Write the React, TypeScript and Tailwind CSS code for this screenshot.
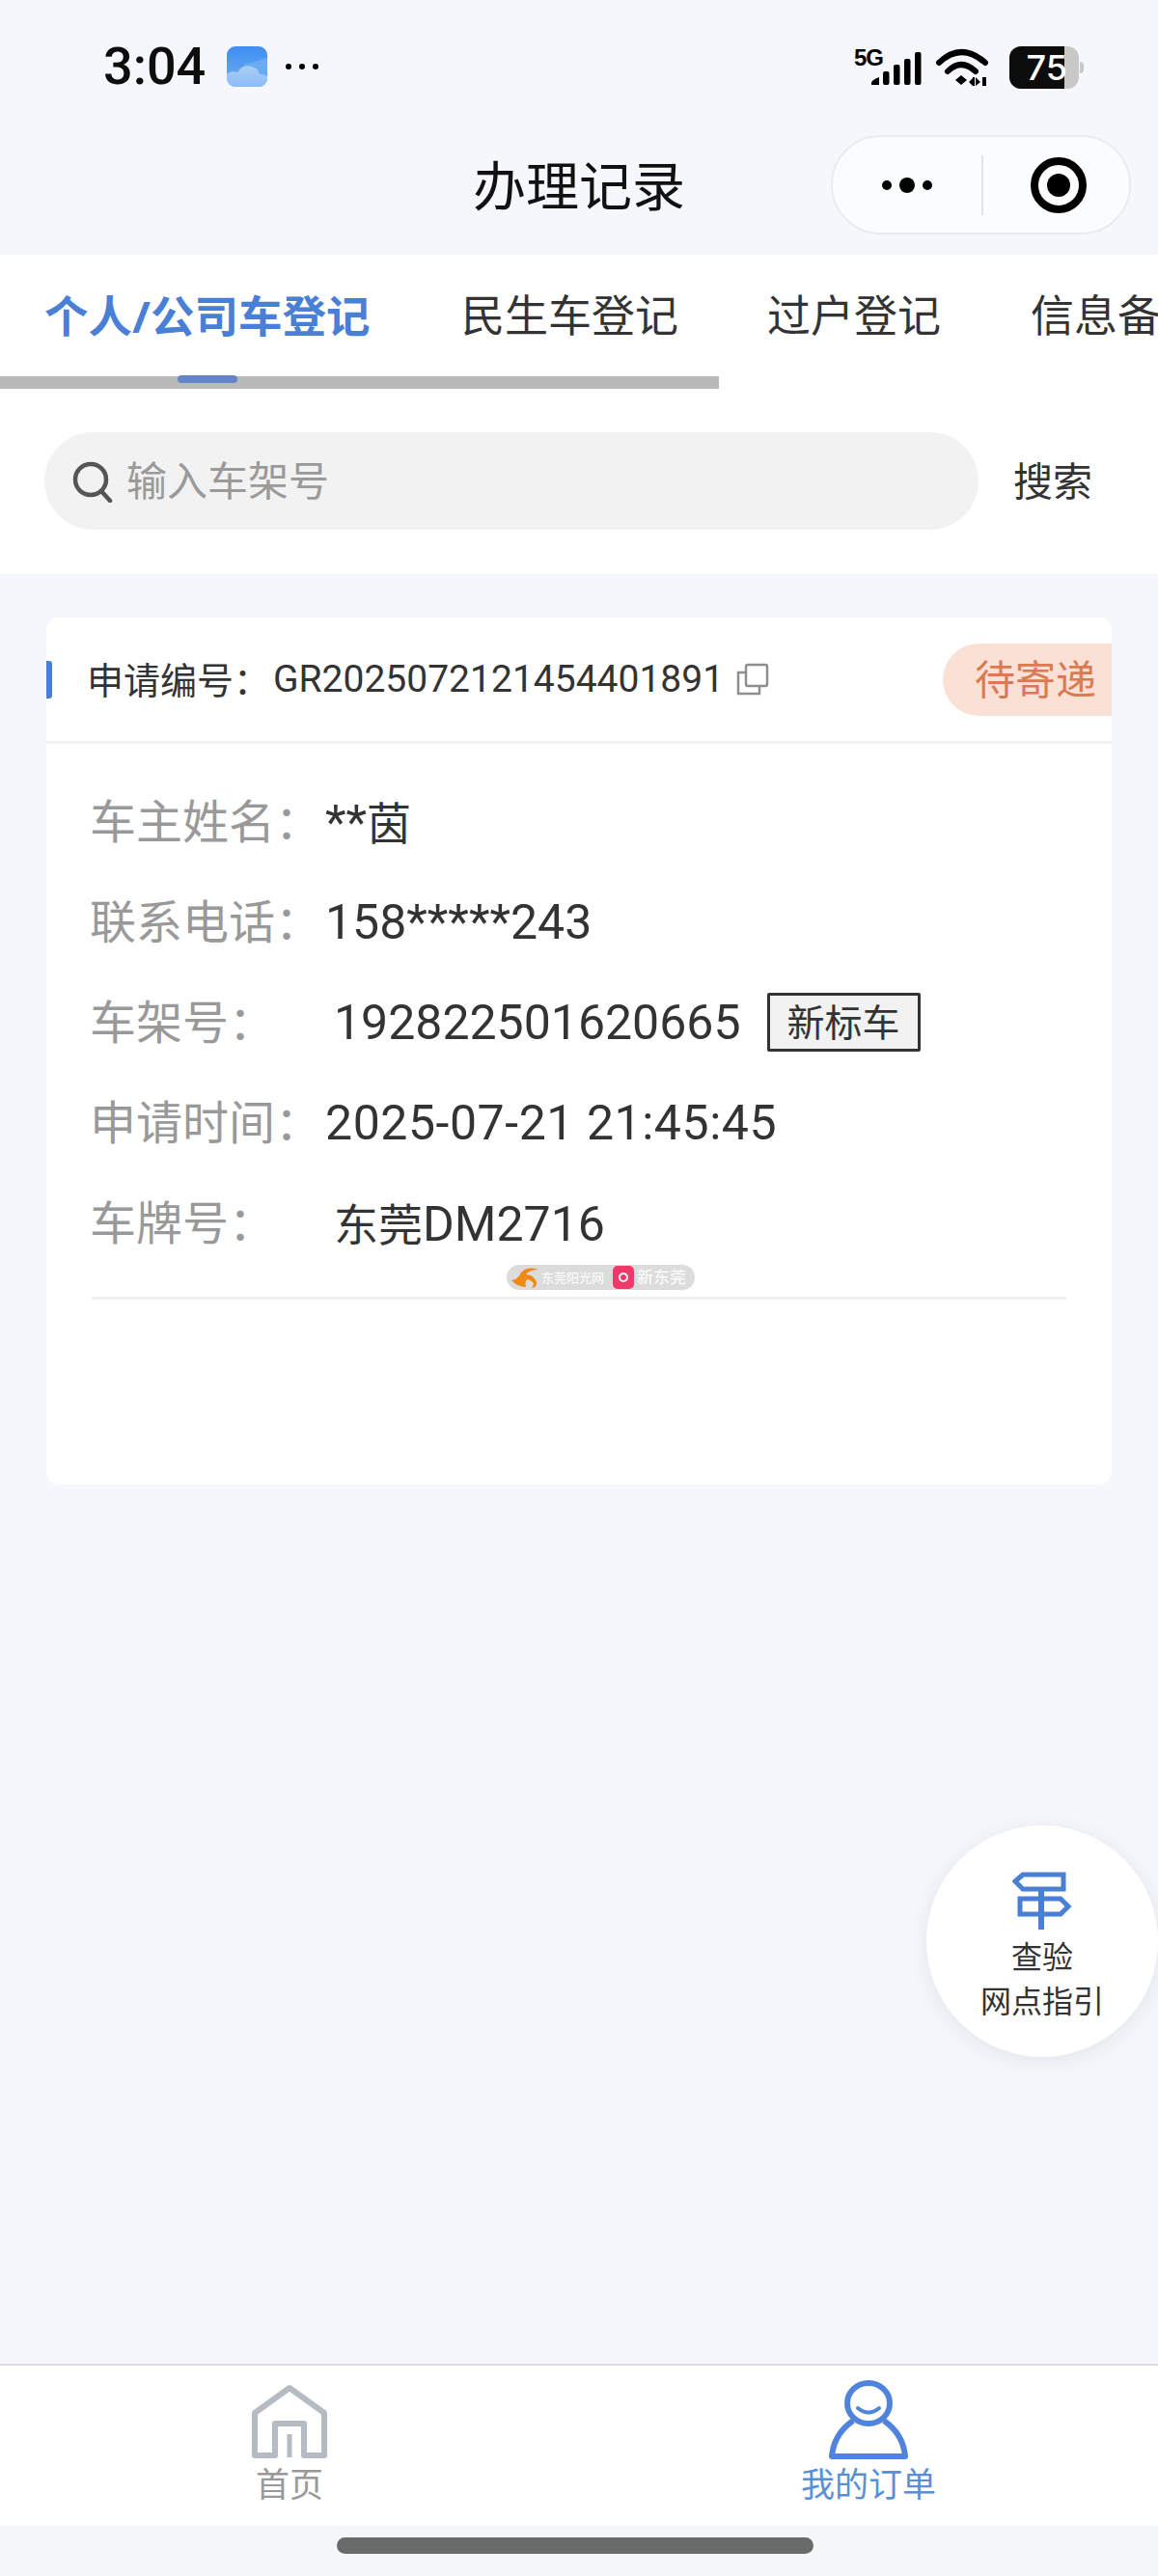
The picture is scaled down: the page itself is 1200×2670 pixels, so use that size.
import type { ReactNode } from 'react'

const cjk = 'font-["Noto_Sans","Noto_Sans_CJK_SC",sans-serif]'
const num = 'font-["Roboto","Noto_Sans_CJK_SC",sans-serif]'

const rows: { label: string; value: ReactNode; tag?: string; inset?: boolean; wide?: boolean }[] = [
  { label: '车主姓名：', value: <>**<span className={`text-[46px] ${cjk}`}>茵</span></> },
  { label: '联系电话：', value: '158*****243' },
  { label: '车架号：', value: '192822501620665', tag: '新标车', inset: true },
  { label: '申请时间：', value: '2025-07-21 21:45:45', wide: true },
  { label: '车牌号：', value: <><span className={`text-[46px] ${cjk}`}>东莞</span>DM2716</>, inset: true },
]

function WeatherIcon() {
  return (
    <svg width="42" height="42" viewBox="0 0 42 42" className="rounded-[9px]">
      <defs>
        <linearGradient id="sky" x1="0" y1="0" x2="0" y2="1">
          <stop offset="0" stopColor="#3f8df0" />
          <stop offset="1" stopColor="#6fb0f5" />
        </linearGradient>
        <linearGradient id="cloud" x1="0" y1="0" x2="0" y2="1">
          <stop offset="0" stopColor="#a9cdf8" />
          <stop offset="1" stopColor="#8dbdf5" />
        </linearGradient>
      </defs>
      <rect width="42" height="42" fill="url(#sky)" />
      <path d="M18 18 Q32 16 42 12 V42 H18 Z" fill="#6aaaf3" />
      <path d="M0 42 V29 Q5 24 11 27 Q16 18 26 21 Q33 23 34 29 Q39 28 42 32 V42 Z" fill="url(#cloud)" />
    </svg>
  )
}

function SignalIcons() {
  return (
    <div className="flex items-center">
      <div className="relative w-[70px] h-[40px]">
        <span className="absolute left-0 top-[-4px] text-[24px] leading-[28px] font-bold text-black font-['Liberation_Sans',sans-serif] tracking-[-1px]">
          5G
        </span>
        <svg width="70" height="40" viewBox="0 0 70 40" className="absolute left-0 top-0">
          <path d="M18 38 V36 Q18 33 26 30 V38 Z" fill="#000" />
          <rect x="30" y="24" width="6.5" height="14" rx="2" fill="#000" />
          <rect x="41" y="17" width="6.5" height="21" rx="2" fill="#000" />
          <rect x="52" y="11" width="6.5" height="27" rx="2" fill="#000" />
          <rect x="63" y="4" width="6.5" height="34" rx="2" fill="#000" />
        </svg>
      </div>
      <svg width="54" height="40" viewBox="0 0 54 40" className="ml-[15px]">
        <path d="M3 15 Q26 -7 51 15" fill="none" stroke="#000" strokeWidth="6" strokeLinecap="round" />
        <path d="M12 24 Q26 10 41 24" fill="none" stroke="#000" strokeWidth="6" strokeLinecap="round" />
        <path d="M20 33 L26 28 L32 33 L26 38 Z" fill="#000" />
        <path d="M38 39 V31 L34 35 Z M41 30 V39 L46 35 Z" fill="#000" />
        <rect x="38" y="30" width="2" height="9" fill="#000" />
        <rect x="48" y="30" width="4" height="9" fill="#000" />
      </svg>
    </div>
  )
}

function Battery() {
  return (
    <div className="flex items-center ml-[22px]">
      <div className="relative w-[72px] h-[44px] rounded-[12px] overflow-hidden bg-[#c8c8c8]">
        <div className="w-[57px] h-full bg-[#0c0c0c] flex items-center justify-end">
          <span className="text-[36px] leading-[44px] font-medium text-white font-['Inter',sans-serif] mr-[-3px]">75</span>
        </div>
      </div>
      <div className="w-[4px] h-[12px] rounded-r-full bg-[#c8c8c8] ml-[1px]" />
    </div>
  )
}

function Capsule() {
  return (
    <div className="w-[311px] h-[103px] rounded-full border-2 border-[#e9ebef] bg-[#fbfcfe] flex items-center">
      <div className="w-[154px] flex items-center justify-center gap-[8px]">
        <span className="w-[10px] h-[10px] rounded-full bg-black" />
        <span className="w-[16px] h-[16px] rounded-full bg-black" />
        <span className="w-[10px] h-[10px] rounded-full bg-black" />
      </div>
      <div className="w-[2px] h-[62px] bg-[#e1e3e8]" />
      <div className="flex-1 flex items-center justify-center pl-[5px]">
        <div className="w-[58px] h-[58px] rounded-full border-[8px] border-black flex items-center justify-center">
          <span className="w-[24px] h-[24px] rounded-full bg-black" />
        </div>
      </div>
    </div>
  )
}

function Watermark() {
  return (
    <div className="ml-[477px] w-[195px] h-[26px] rounded-full bg-[#dcdcdc] flex items-center pl-[4px] overflow-hidden">
      <svg width="30" height="24" viewBox="0 0 30 24" className="shrink-0">
        <path d="M1 15 Q8 14 11 7 Q17 0 29 4 Q20 4 16 9 Q24 9 27 17 Q28 22 22 23 Q27 17 18 14 Q14 16 16 22 Q7 22 1 15 Z" fill="#ef8a17" />
      </svg>
      <span className="ml-[2px] text-[13px] leading-[16px] text-white whitespace-nowrap shrink-0">东莞阳光网</span>
      <span className="w-[22px] h-[24px] rounded-[5px] bg-[#f0386b] ml-[9px] flex items-center justify-center shrink-0">
        <span className="w-[10px] h-[10px] rounded-full border-2 border-white" />
      </span>
      <span className="ml-[3px] text-[17px] leading-[20px] text-white whitespace-nowrap shrink-0">新东莞</span>
    </div>
  )
}

function HomeIcon() {
  return (
    <svg width="78" height="78" viewBox="0 0 78 78">
      <path
        d="M24 74 V41 H54 V74 H75 V30 L39 4 L3 30 V74 Z"
        fill="none"
        stroke="#b5bac3"
        strokeWidth="6"
        strokeLinejoin="round"
      />
      <path d="M39 52 V76" stroke="#b5bac3" strokeWidth="5" />
    </svg>
  )
}

function PersonIcon() {
  return (
    <svg width="82" height="82" viewBox="0 0 82 82">
      <ellipse cx="41" cy="24" rx="22" ry="21" fill="none" stroke="#4f83dc" strokeWidth="6" />
      <path d="M30 29 Q41 38 52 29" fill="none" stroke="#4f83dc" strokeWidth="4" strokeLinecap="round" />
      <path
        d="M25 42 Q5 56 3 79 H79 Q77 56 57 42"
        fill="none"
        stroke="#4f83dc"
        strokeWidth="6"
        strokeLinejoin="round"
      />
    </svg>
  )
}

function SignpostIcon() {
  return (
    <svg width="62" height="60" viewBox="0 0 62 60">
      <path d="M3 10 L11 3 H53 V18 H11 Z" fill="none" stroke="#4a7fd6" strokeWidth="5" />
      <path d="M8 28 H50 L58 36 L50 44 H8 Z" fill="none" stroke="#4a7fd6" strokeWidth="5" />
      <path d="M30 18 V60" stroke="#4a7fd6" strokeWidth="6" />
    </svg>
  )
}

export default function App() {
  return (
    <div className={`relative w-[1200px] h-[2670px] bg-[#f5f7fc] flex flex-col overflow-hidden ${cjk}`}>
      {/* status bar */}
      <div className="h-[132px] pt-[48px] pl-[107px] pr-[77px] flex items-start justify-between">
        <div className="flex items-center h-[42px]">
          <span className={`text-[54px] leading-[42px] font-medium text-[#0d0d0d] ${num}`}>3:04</span>
          <div className="ml-[22px]">
            <WeatherIcon />
          </div>
          <div className="ml-[19px] flex gap-[8px]">
            <span className="w-[6px] h-[6px] rounded-full bg-black" />
            <span className="w-[6px] h-[6px] rounded-full bg-black" />
            <span className="w-[6px] h-[6px] rounded-full bg-black" />
          </div>
        </div>
        <div className="flex items-center">
          <SignalIcons />
          <Battery />
        </div>
      </div>

      {/* nav */}
      <div className="relative h-[132px] flex items-start justify-center">
        <span className="mt-[28px] text-[55px] leading-[64px] text-[#111]">办理记录</span>
        <div className="absolute right-[28px] top-[8px]">
          <Capsule />
        </div>
      </div>

      {/* tabs */}
      <div className="bg-white h-[331px] flex flex-col">
        <div className="relative h-[139px] overflow-hidden">
          <div className="flex items-start pt-[35px] pl-[46px] whitespace-nowrap">
            <span className="shrink-0 text-[45.5px] leading-[56px] font-bold text-[#4a7fd6] w-[432px]">个人/公司车登记</span>
            <span className="shrink-0 text-[45px] leading-[56px] text-[#333] w-[317px]">民生车登记</span>
            <span className="shrink-0 text-[45px] leading-[56px] text-[#333] w-[273px]">过户登记</span>
            <span className="shrink-0 text-[45px] leading-[56px] text-[#333]">信息备案</span>
          </div>
          <div className="absolute left-0 top-[126px] w-[745px] h-[13px] bg-[#b9b9b9]" />
          <div className="absolute left-[184px] top-[125px] w-[62px] h-[8px] rounded-full bg-[#6386c8]" />
        </div>
        <div className="mt-[45px] pl-[46px] pr-[68px] flex items-center">
          <div className="w-[968px] h-[101px] rounded-full bg-[#f2f2f2] flex items-center pl-[28px]">
            <svg width="44" height="44" viewBox="0 0 44 44">
              <circle cx="20" cy="20" r="16" fill="none" stroke="#555" strokeWidth="4.5" />
              <path d="M31 32 L40 42" stroke="#555" strokeWidth="4.5" strokeLinecap="round" />
            </svg>
            <span className="ml-[13px] mt-[-2px] text-[42px] leading-[52px] text-[#9a9a9a]">输入车架号</span>
          </div>
          <span className="ml-[36px] mt-[-2px] text-[41px] leading-[52px] text-[#333] whitespace-nowrap">搜索</span>
        </div>
      </div>

      {/* card */}
      <div className="mt-[45px] mx-[48px] h-[899px] rounded-[14px] bg-white flex flex-col overflow-hidden">
        <div className="h-[131px] border-b-[3px] border-[#f1f2f4] flex items-center">
          <div className="w-[6px] h-[39px] rounded-r-[3px] bg-[#4a7fd6]" />
          <span className="ml-[36px] text-[38px] leading-[48px] text-[#333] whitespace-nowrap">申请编号：</span>
          <span className={`ml-[3px] text-[39px] leading-[48px] text-[#333] whitespace-nowrap ${num}`}>GR2025072121454401891</span>
          <svg width="34" height="34" viewBox="0 0 34 34" className="ml-[13px]">
            <rect x="10" y="2" width="22" height="22" rx="2" fill="none" stroke="#8f8f8f" strokeWidth="2.5" />
            <path d="M9 10 H2 V32 H24 V25" fill="none" stroke="#8f8f8f" strokeWidth="2.5" />
          </svg>
          <div className="ml-auto w-[175px] h-[75px] rounded-l-full bg-[#fae0d5] flex items-center pl-[33px]">
            <span className="text-[42px] leading-[52px] text-[#d97a52] whitespace-nowrap">待寄递</span>
          </div>
        </div>
        <div className="pt-[50px] pl-[45px] flex flex-col gap-[44px]">
          {rows.map((row) => (
            <div key={row.label} className="h-[60px] flex items-center whitespace-nowrap">
              <span className="w-[244px] text-[48px] leading-[60px] text-[#999]">{row.label}</span>
              <span className={`pt-[2px] text-[50px] leading-[60px] text-[#333] ${num} ${row.inset ? 'ml-[9px]' : ''} ${row.wide ? 'tracking-[0.55px]' : ''}`}>{row.value}</span>
              {row.tag && (
                <span className="ml-[27px] w-[159px] h-[61px] border-[3px] border-[#333] rounded-[2px] bg-[#f2f2f2] flex items-center justify-center text-[39px] leading-[48px] text-[#333]">
                  {row.tag}
                </span>
              )}
            </div>
          ))}
        </div>
        <div className="mt-[14px]">
          <Watermark />
        </div>
        <div className="mt-[7px] mx-[47px] h-[3px] bg-[#f0f1f3]" />
      </div>

      {/* floating guide button */}
      <div className="absolute left-[960px] top-[1892px] w-[240px] h-[240px] rounded-full bg-white shadow-[0_4px_24px_rgba(0,0,0,0.08)] flex flex-col items-center pt-[48px]">
        <SignpostIcon />
        <span className="mt-[5px] text-[32px] leading-[46px] text-[#333]">查验</span>
        <span className="text-[32px] leading-[46px] text-[#333]">网点指引</span>
      </div>

      {/* bottom tab bar */}
      <div className="mt-auto h-[168px] bg-white border-t-2 border-[#dcdde0] flex">
        <div className="w-[600px] flex flex-col items-center pt-[19px]">
          <HomeIcon />
          <span className="mt-[4px] text-[35px] leading-[44px] text-[#999]">首页</span>
        </div>
        <div className="w-[600px] flex flex-col items-center pt-[15px]">
          <PersonIcon />
          <span className="mt-[4px] text-[35px] leading-[44px] text-[#5b8fd2]">我的订单</span>
        </div>
      </div>
      <div className="h-[52px] bg-[#f5f6f8] flex justify-center pt-[12px]">
        <div className="ml-[-8px] w-[494px] h-[17px] rounded-full bg-[#6a6a6a]" />
      </div>
    </div>
  )
}
